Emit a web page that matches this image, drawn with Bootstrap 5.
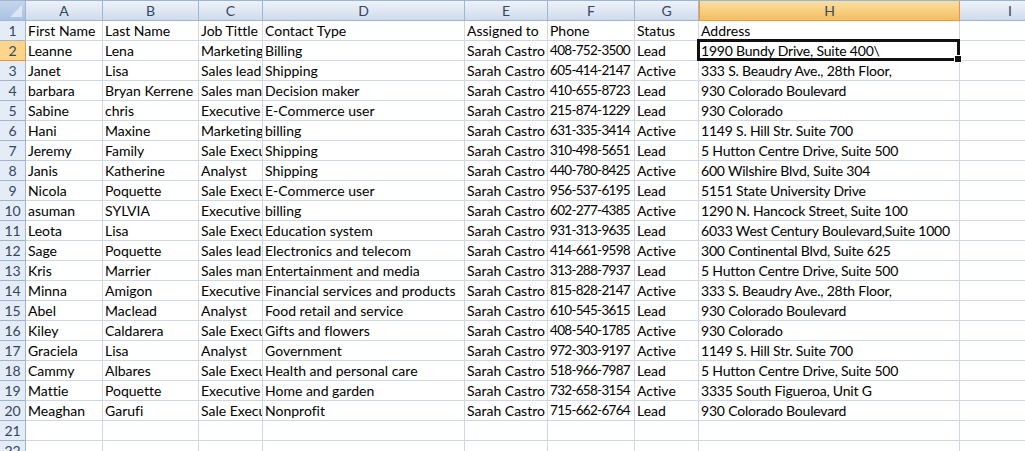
<!DOCTYPE html>
<html lang="en">
<head>
<meta charset="UTF-8">
<meta name="viewport" content="width=device-width, initial-scale=1.0">
<title>Contacts</title>
<link href="https://cdn.jsdelivr.net/npm/bootstrap@5.3.0/dist/css/bootstrap.min.css" rel="stylesheet">
<style>
    html, body { height: 451px; overflow: hidden; background: #fff; }
    .sheet-wrap { width: 1025px; height: 451px; overflow: hidden; border-top: 1px solid #9db5d1; }
    table.sheet { table-layout: fixed; width: 1061px; border-collapse: separate; border-spacing: 0; margin: 0;
        font-family: Lato, "Open Sans", sans-serif; font-size: 14px; color: #000; font-variant-ligatures: none; }
    .sheet th, .sheet td { height: 20px; padding: 0 0 0 2px; border: 0; border-right: 1px solid #d0d7e5; border-bottom: 1px solid #d0d7e5;
        white-space: nowrap; overflow: hidden; font-weight: 400; line-height: 19px; vertical-align: middle; box-sizing: border-box; }
    .sheet td.txt-phone { font-size: 13.5px; letter-spacing: -0.7px; }
    .sheet td.txt-addr { letter-spacing: -0.2px; }
    .sheet .col-hd { text-align: center; padding: 0; color: #33475f; background: linear-gradient(#eef3fa, #dfe7f3 50%, #cfdbeb);
        border-right: 1px solid #9eb6ce; border-bottom: 1px solid #9eb6ce; }
    .sheet .col-hd.on { background: linear-gradient(#f9dfa5, #f7cf80 50%, #f3bd63); border-right-color: #f29536; border-bottom-color: #f29536; border-left: 1px solid #f29536; color: #3b4a5c; }
    .sheet .row-hd { text-align: center; padding: 0; color: #33475f; background: #e4ecf7; border-right: 1px solid #9eb6ce; border-bottom: 1px solid #9eb6ce; }
    .sheet .row-hd.on { background: #fdd68b; border-right-color: #f29536; border-bottom-color: #f29536; }
    .sheet .corner { position: relative; background: linear-gradient(#c5d6ec, #a9c2e2); border-right: 1px solid #9eb6ce; border-bottom: 1px solid #9eb6ce; }
    .corner-tri { position: absolute; right: 3px; bottom: 3px; }
    .sheet td.cell-active { position: relative; overflow: visible; }
    .sel-box { position: absolute; left: -2px; top: -2px; right: -1px; bottom: -1px; border: 3px solid #111; pointer-events: none; }
    .sel-handle { position: absolute; right: -3px; bottom: -3px; width: 6px; height: 6px; background: #111; border: 1px solid #fff; box-sizing: content-box; }
    .w-hd { width: 26px; } .w-a { width: 77px; } .w-b { width: 96px; } .w-c { width: 64px; } .w-d { width: 202px; }
    .w-e { width: 83px; } .w-f { width: 87px; } .w-g { width: 64px; } .w-h { width: 261px; } .w-i { width: 101px; }
</style>
</head>
<body>
<div class="sheet-wrap">
<table class="sheet" id="sheet">
    <colgroup>
        <col class="w-hd"><col class="w-a"><col class="w-b"><col class="w-c"><col class="w-d">
        <col class="w-e"><col class="w-f"><col class="w-g"><col class="w-h"><col class="w-i">
    </colgroup>
    <thead>
        <tr>
            <th class="corner"><svg class="corner-tri" width="12" height="12" viewBox="0 0 12 12"><polygon points="12,0 12,12 0,12" fill="#e6eef8" fill-opacity="0.8"/></svg></th>
            <th class="col-hd">A</th><th class="col-hd">B</th><th class="col-hd">C</th><th class="col-hd">D</th>
            <th class="col-hd">E</th><th class="col-hd">F</th><th class="col-hd">G</th><th class="col-hd on">H</th><th class="col-hd">I</th>
        </tr>
    </thead>
    <tbody id="rows"></tbody>
</table>
</div>
<script src="https://cdn.jsdelivr.net/npm/bootstrap@5.3.0/dist/js/bootstrap.bundle.min.js"></script>
<script>
    const data = [
        ['First Name','Last Name','Job Tittle','Contact Type','Assigned to','Phone','Status','Address'],
        ['Leanne','Lena','Marketing Manager','Billing','Sarah Castro','408-752-3500','Lead','1990 Bundy Drive, Suite 400\\'],
        ['Janet','Lisa','Sales lead','Shipping','Sarah Castro','605-414-2147','Active','333 S. Beaudry Ave., 28th Floor,'],
        ['barbara','Bryan Kerrene','Sales manager','Decision maker','Sarah Castro','410-655-8723','Lead','930 Colorado Boulevard'],
        ['Sabine','chris','Executive','E-Commerce user','Sarah Castro','215-874-1229','Lead','930 Colorado'],
        ['Hani','Maxine','Marketing Manager','billing','Sarah Castro','631-335-3414','Active','1149 S. Hill Str. Suite 700'],
        ['Jeremy','Family','Sale Executive','Shipping','Sarah Castro','310-498-5651','Lead','5 Hutton Centre Drive, Suite 500'],
        ['Janis','Katherine','Analyst','Shipping','Sarah Castro','440-780-8425','Active','600 Wilshire Blvd, Suite 304'],
        ['Nicola','Poquette','Sale Executive','E-Commerce user','Sarah Castro','956-537-6195','Lead','5151 State University Drive'],
        ['asuman','SYLVIA','Executive','billing','Sarah Castro','602-277-4385','Active','1290 N. Hancock Street, Suite 100'],
        ['Leota','Lisa','Sale Executive','Education system','Sarah Castro','931-313-9635','Lead','6033 West Century Boulevard,Suite 1000'],
        ['Sage','Poquette','Sales lead','Electronics and telecom','Sarah Castro','414-661-9598','Active','300 Continental Blvd, Suite 625'],
        ['Kris','Marrier','Sales manager','Entertainment and media','Sarah Castro','313-288-7937','Lead','5 Hutton Centre Drive, Suite 500'],
        ['Minna','Amigon','Executive','Financial services and products','Sarah Castro','815-828-2147','Active','333 S. Beaudry Ave., 28th Floor,'],
        ['Abel','Maclead','Analyst','Food retail and service','Sarah Castro','610-545-3615','Lead','930 Colorado Boulevard'],
        ['Kiley','Caldarera','Sale Executive','Gifts and flowers','Sarah Castro','408-540-1785','Active','930 Colorado'],
        ['Graciela','Lisa','Analyst','Government','Sarah Castro','972-303-9197','Active','1149 S. Hill Str. Suite 700'],
        ['Cammy','Albares','Sale Executive','Health and personal care','Sarah Castro','518-966-7987','Lead','5 Hutton Centre Drive, Suite 500'],
        ['Mattie','Poquette','Executive','Home and garden','Sarah Castro','732-658-3154','Active','3335 South Figueroa, Unit G'],
        ['Meaghan','Garufi','Sale Executive','Nonprofit','Sarah Castro','715-662-6764','Lead','930 Colorado Boulevard'],
        ['','','','','','','',''],
        ['','','','','','','','']
    ];
    let html = '';
    data.forEach(function (row, i) {
        const active = i === 1;
        html += '<tr><th class="row-hd' + (active ? ' on' : '') + '">' + (i + 1) + '</th>';
        row.forEach(function (val, j) {
            let cls = j === 5 && i > 0 ? 'txt-phone' : (j === 7 && i > 0 ? 'txt-addr' : '');
            if (active && j === 7) {
                html += '<td class="cell-active ' + cls + '">' + val + '<span class="sel-box"></span><span class="sel-handle"></span></td>';
            } else {
                html += '<td class="' + cls + '">' + val + '</td>';
            }
        });
        html += '<td></td></tr>';
    });
    document.getElementById('rows').innerHTML = html;
</script>
</body>
</html>
